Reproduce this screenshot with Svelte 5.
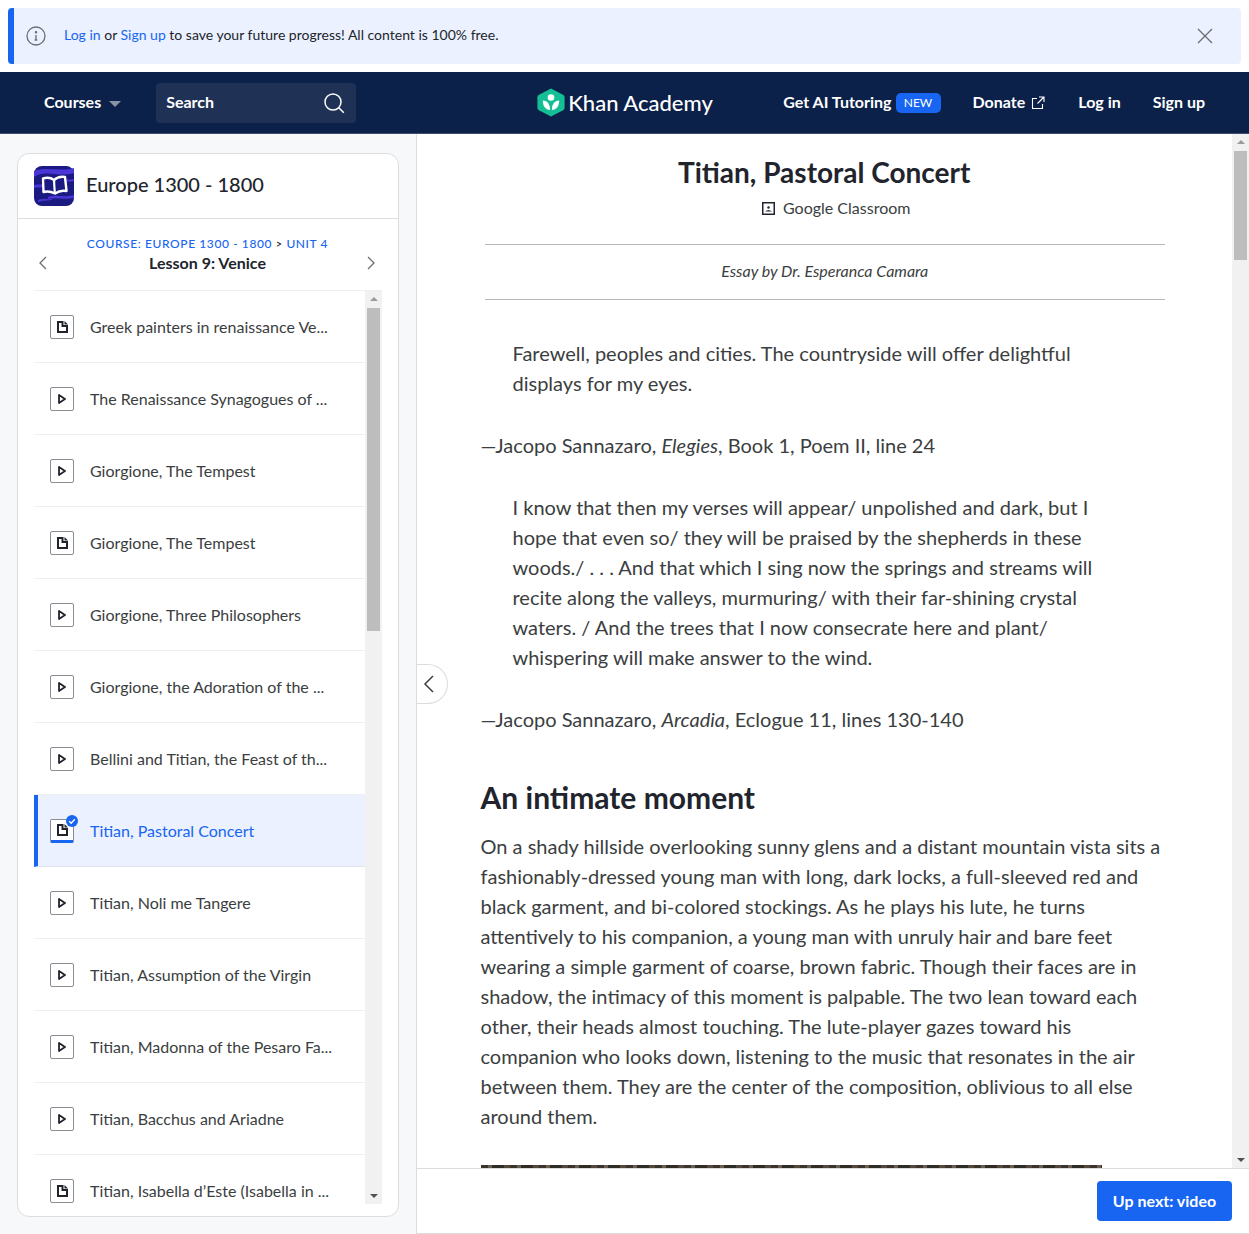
<script>
  const lessons = [
    { title: 'Greek painters in renaissance Ve...', type: 'doc' },
    { title: 'The Renaissance Synagogues of ...', type: 'video' },
    { title: 'Giorgione, The Tempest', type: 'video' },
    { title: 'Giorgione, The Tempest', type: 'doc' },
    { title: 'Giorgione, Three Philosophers', type: 'video' },
    { title: 'Giorgione, the Adoration of the ...', type: 'video' },
    { title: 'Bellini and Titian, the Feast of th...', type: 'video' },
    { title: 'Titian, Pastoral Concert', type: 'doc', active: true },
    { title: 'Titian, Noli me Tangere', type: 'video' },
    { title: 'Titian, Assumption of the Virgin', type: 'video' },
    { title: 'Titian, Madonna of the Pesaro Fa...', type: 'video' },
    { title: 'Titian, Bacchus and Ariadne', type: 'video' },
    { title: 'Titian, Isabella d’Este (Isabella in ...', type: 'doc' }
  ];
</script>

<div class="page">
  <div class="banner">
    <svg class="info" width="20" height="20" viewBox="0 0 20 20" fill="none" stroke="#6b6d74" stroke-width="1.3">
      <circle cx="10" cy="10" r="9" />
      <path d="M10 9v5M8.6 14h2.6" />
      <circle cx="10" cy="6.3" r=".6" fill="#6b6d74" />
    </svg>
    <p><a href="#login">Log in</a> or <a href="#signup">Sign up</a> to save your future progress! All content is 100% free.</p>
    <svg class="close" width="16" height="16" viewBox="0 0 16 16" fill="none" stroke="#6b6d74" stroke-width="1.3">
      <path d="M1 1l14 14M15 1L1 15" />
    </svg>
  </div>

  <nav class="nav">
    <div class="nav-left">
      <span class="nav-link">Courses</span>
      <span class="caret"></span>
      <div class="search">
        <span class="nav-link">Search</span>
        <svg width="22" height="22" viewBox="0 0 22 22" fill="none" stroke="#fff" stroke-width="1.5">
          <circle cx="10" cy="10" r="8" />
          <path d="M15.8 15.8l5 5" />
        </svg>
      </div>
    </div>
    <div class="logo">
      <svg width="28" height="29" viewBox="0 0 28 29">
        <path d="M14 0.5l12 6.2a3 3 0 0 1 1.6 2.6v10.4a3 3 0 0 1-1.6 2.6l-12 6.2-12-6.2a3 3 0 0 1-1.6-2.6V9.300a3 3 0 0 1 1.600-2.600z" fill="#14bf96" />
        <circle cx="14" cy="9.500" r="3.300" fill="#fff" />
        <path d="M5.800 12.500c4.600.3 7.300 3.400 7.300 9.500-4.600-.4-7.300-3.700-7.300-9.500zM22.200 12.500c-4.600.3-7.300 3.400-7.300 9.500 4.600-.4 7.300-3.700 7.300-9.500z" fill="#fff" />
      </svg>
      <span>Khan Academy</span>
    </div>
    <div class="nav-right">
      <span class="nav-link">Get AI Tutoring</span>
      <span class="badge">NEW</span>
      <span class="nav-link donate">Donate</span>
      <svg class="ext" width="14" height="14" viewBox="0 0 14 14" fill="none" stroke="#fff" stroke-width="1.100">
        <path d="M6 2.500H1.500v10h10V8M8 1h5v5M13 1L6.500 7.500" />
      </svg>
      <span class="nav-link login">Log in</span>
      <span class="nav-link signup">Sign up</span>
    </div>
  </nav>

  <div class="main">
    <aside class="side">
      <div class="card">
        <header class="card-head">
          <svg class="course-icon" width="40" height="40" viewBox="0 0 40 40">
            <rect width="40" height="40" rx="8" fill="#1a1a80" />
            <path d="M0 11C12 3 24 12 40 7V2C26 6 12 0 0 5zM14 31c8-3 16 1 26-2v3c-10 2-18-1-26 1zM0 19c4-1 6 0 9-1v3c-3 1-6 0-9 1zM31 14c3-1 6 0 9-1v2c-3 1-6 0-9 1zM4 34c6-2 8 0 14-1v1c-6 1-8 0-14 2z" fill="#4a35d6" />
            <path d="M9 12.500c4-1.200 8-.8 11 1.500 3-2.800 7-3.600 11-3l1.500 14c-4-.8-8 0-11.500 2.500-3.800-2-8-2.500-11.500-1.500z" fill="none" stroke="#fff" stroke-width="2.400" stroke-linejoin="round" />
            <path d="M20 14l.8 13" stroke="#fff" stroke-width="2.200" />
          </svg>
          <h2>Europe 1300 - 1800</h2>
        </header>

        <div class="lesson-head">
          <svg width="10" height="14" viewBox="0 0 10 14" fill="none" stroke="#6b6d74" stroke-width="1.300"><path d="M8 1L2 7l6 6" /></svg>
          <div class="crumbs">
            <div class="crumb"><a href="#course">COURSE: EUROPE 1300 - 1800</a> <span class="gt">&gt;</span> <a href="#unit">UNIT 4</a></div>
            <div class="lesson-name">Lesson 9: Venice</div>
          </div>
          <svg width="10" height="14" viewBox="0 0 10 14" fill="none" stroke="#6b6d74" stroke-width="1.300"><path d="M2 1l6 6-6 6" /></svg>
        </div>

        <div class="list-wrap">
          <ul class="list">
            {#each lessons as lesson}
              <li class="row" class:active={lesson.active}>
                <span class="type">
                  {#if lesson.type === 'doc'}
                    <svg width="11" height="12" viewBox="0 0 11 12">
                      <path d="M1 1h4.500v4H10v6H1z" fill="none" stroke="#21242c" stroke-width="2" />
                      <path d="M7.500 0L11 3.500H7.500z" fill="#21242c" />
                    </svg>
                  {:else}
                    <svg width="8" height="10" viewBox="0 0 8 10" fill="none" stroke="#21242c" stroke-width="1.800" stroke-linejoin="round">
                      <path d="M1 1l6 4-6 4z" />
                    </svg>
                  {/if}
                  {#if lesson.active}
                    <svg class="check" width="12" height="12" viewBox="0 0 12 12">
                      <circle cx="6" cy="6" r="6" fill="#1865f2" />
                      <path d="M3.200 6.200l2 2 3.600-4" fill="none" stroke="#fff" stroke-width="1.400" />
                    </svg>
                  {/if}
                </span>
                <span class="lesson-title">{lesson.title}</span>
              </li>
            {/each}
          </ul>
          <div class="bar side-bar">
            <span class="arrow up"></span>
            <span class="thumb"></span>
            <span class="arrow down"></span>
          </div>
        </div>
      </div>
    </aside>

    <section class="content">
      <button class="collapse" aria-label="Collapse">
        <svg width="11" height="18" viewBox="0 0 11 18" fill="none" stroke="#3b3e40" stroke-width="1.500"><path d="M10 1L2 9l8 8" /></svg>
      </button>
      <div class="scroller">
        <article class="article">
          <h1>Titian, Pastoral Concert</h1>
          <div class="classroom">
            <svg width="13" height="13" viewBox="0 0 13 13">
              <rect x=".75" y=".75" width="11.500" height="11.500" fill="none" stroke="#21242c" stroke-width="1.500" />
              <circle cx="6.500" cy="5.500" r="1.200" fill="#21242c" />
              <path d="M3.500 9.500h6v-.6l-3-1-3 1z" fill="#21242c" />
            </svg>
            <span>Google Classroom</span>
          </div>
          <div class="byline"><span>Essay by Dr. Esperanca Camara</span></div>

          <blockquote>Farewell, peoples and cities. The countryside will offer delightful displays for my eyes.</blockquote>
          <p class="cite">—Jacopo Sannazaro, <em>Elegies</em>, Book 1, Poem II, line 24</p>
          <blockquote>I know that then my verses will appear/ unpolished and dark, but I hope that even so/ they will be praised by the shepherds in these woods./ . . . And that which I sing now the springs and streams will recite along the valleys, murmuring/ with their far-shining crystal waters. / And the trees that I now consecrate here and plant/ whispering will make answer to the wind.</blockquote>
          <p class="cite">—Jacopo Sannazaro, <em>Arcadia</em>, Eclogue 11, lines 130-140</p>

          <h2 class="section">An intimate moment</h2>
          <p>On a shady hillside overlooking sunny glens and a distant mountain vista sits a fashionably-dressed young man with long, dark locks, a full-sleeved red and black garment, and bi-colored stockings. As he plays his lute, he turns attentively to his companion, a young man with unruly hair and bare feet wearing a simple garment of coarse, brown fabric. Though their faces are in shadow, the intimacy of this moment is palpable. The two lean toward each other, their heads almost touching. The lute-player gazes toward his companion who looks down, listening to the music that resonates in the air between them. They are the center of the composition, oblivious to all else around them.</p>
          <div class="painting"></div>
        </article>
        <div class="bar main-bar">
          <span class="arrow up"></span>
          <span class="thumb"></span>
          <span class="arrow down"></span>
        </div>
      </div>
      <footer class="foot">
        <button class="next">Up next: video</button>
      </footer>
    </section>
  </div>
</div>

<style>
  :global(body) {
    margin: 0;
    background: #fff;
    font-family: Lato, "Noto Sans", sans-serif;
    color: #21242c;
  }

  .page {
    height: 100vh;
    display: flex;
    flex-direction: column;
    overflow: hidden;
  }

  .banner {
    flex: none;
    height: 56px;
    margin: 8px 8px 8px;
    box-sizing: border-box;
    background: #ebf1fe;
    border-left: 6px solid #1865f2;
    border-radius: 4px;
    display: flex;
    align-items: center;
    padding: 0 28px 0 12px;
    font-size: 14px;
  }
  .banner p {
    margin: 0 0 4px 18px;
    flex: 1;
  }
  .banner a {
    color: #1865f2;
    text-decoration: none;
  }

  .nav {
    flex: none;
    height: 62px;
    box-sizing: border-box;
    background: #0c2149;
    border-bottom: 1px solid #3d4d6e;
    display: grid;
    grid-template-columns: 1fr auto 1fr;
    align-items: center;
    padding: 0 44px;
    color: #fff;
  }
  .nav-left, .nav-right {
    display: flex;
    align-items: center;
  }
  .nav-right {
    justify-content: flex-end;
  }
  .nav-link {
    font-size: 16px;
    font-weight: 700;
    padding-bottom: 2px;
  }
  .caret {
    margin: 2px 0 0 8px;
    border: 6px solid transparent;
    border-top: 6px solid #8a93a6;
    border-bottom: 0;
  }
  .search {
    margin-left: 35px;
    width: 200px;
    height: 40px;
    box-sizing: border-box;
    background: #1f3155;
    border-radius: 4px;
    display: flex;
    align-items: center;
    justify-content: space-between;
    padding: 0 11px 0 10px;
  }
  .logo {
    display: flex;
    align-items: center;
    gap: 4px;
    font-size: 22px;
    font-weight: 500;
  }
  .logo svg {
    margin-left: 1px;
    margin-right: -1px;
  }
  .badge {
    margin-left: 4px;
    width: 45px;
    height: 20px;
    background: #1865f2;
    border-radius: 5px;
    font-size: 12px;
    line-height: 20px;
    text-align: center;
  }
  .donate {
    margin-left: 32px;
  }
  .ext {
    margin-left: 6px;
  }
  .login {
    margin-left: 33px;
  }
  .signup {
    margin-left: 32px;
  }

  .main {
    flex: 1;
    min-height: 0;
    display: flex;
  }

  .side {
    flex: none;
    width: 417px;
    box-sizing: border-box;
    padding: 19px 17px 17px;
    background: #f7f8fa;
    border-right: 1px solid #dcdcdc;
  }
  .card {
    height: 100%;
    box-sizing: border-box;
    background: #fff;
    border: 1px solid #dcdde0;
    border-radius: 12px;
    display: flex;
    flex-direction: column;
    overflow: hidden;
    padding-bottom: 12px;
  }
  .card-head {
    flex: none;
    height: 65px;
    box-sizing: border-box;
    display: flex;
    align-items: center;
    gap: 12px;
    padding: 0 0 1px 16px;
    border-bottom: 1px solid #dcdde0;
  }
  .card-head h2 {
    margin: 0 0 4px;
    font-size: 20px;
    font-weight: 500;
  }
  .lesson-head {
    flex: none;
    height: 71px;
    display: flex;
    align-items: center;
    justify-content: space-between;
    padding: 0 22px 0 20px;
    box-sizing: border-box;
  }
  .lesson-head svg {
    margin-top: 16px;
  }
  .crumbs {
    text-align: center;
    margin-left: 1px;
  }
  .crumb {
    font-size: 12px;
    font-weight: 500;
    line-height: 16px;
    letter-spacing: .6px;
  }
  .crumb a {
    color: #1865f2;
    text-decoration: none;
  }
  .gt {
    font-size: 11px;
  }
  .lesson-name {
    font-size: 16px;
    line-height: 22px;
    font-weight: 700;
  }
  .list-wrap {
    flex: 1;
    min-height: 0;
    margin: 0 16px;
    display: flex;
    border-top: 1px solid #eeeff0;
  }
  .list {
    flex: 1;
    min-width: 0;
    margin: 0;
    padding: 0;
    list-style: none;
    overflow: hidden;
  }
  .row {
    height: 72px;
    box-sizing: border-box;
    display: flex;
    align-items: center;
    gap: 16px;
    padding-left: 16px;
    border-bottom: 1px solid #eeeff0;
    font-size: 16px;
    color: #3b3e40;
  }
  .row.active {
    background: #ebf1fe;
    border-left: 4px solid #1865f2;
    border-bottom-color: #dfe3ea;
    padding-left: 12px;
  }
  .row.active .lesson-title {
    color: #1865f2;
  }
  .row.active .type {
    border-bottom: 3px solid #1865f2;
    border-radius: 2px;
    height: 24px;
  }
  .lesson-title {
    white-space: nowrap;
  }
  .type {
    flex: none;
    position: relative;
    width: 24px;
    height: 24px;
    box-sizing: border-box;
    border: 1px solid #888d93;
    border-radius: 2px;
    background: #fff;
    display: flex;
    align-items: center;
    justify-content: center;
  }
  .check {
    position: absolute;
    top: -5px;
    right: -5px;
  }

  .bar {
    flex: none;
    background: #f1f1f1;
    display: flex;
    flex-direction: column;
    align-items: center;
  }
  .side-bar {
    width: 17px;
  }
  .main-bar {
    width: 17px;
  }
  .thumb {
    width: 13px;
    background: #bdbdbd;
  }
  .side-bar .thumb {
    height: 323px;
  }
  .main-bar .thumb {
    height: 109px;
  }
  .arrow {
    flex: none;
    width: 0;
    height: 0;
    border: 4px solid transparent;
  }
  .arrow.up {
    margin: 6px 0 7px;
    border-top: 0;
    border-bottom: 4px solid #9a9a9a;
  }
  .arrow.down {
    margin: auto 0 6px;
    border-bottom: 0;
    border-top: 4px solid #505050;
  }

  .content {
    flex: 1;
    min-width: 0;
    position: relative;
    display: flex;
    flex-direction: column;
    background: #fff;
  }
  .collapse {
    position: absolute;
    left: 0;
    top: 530px;
    width: 31px;
    height: 40px;
    background: #fff;
    border: 1px solid #dcdcdc;
    border-left: 0;
    border-radius: 0 20px 20px 0;
    display: flex;
    align-items: center;
    justify-content: flex-start;
    z-index: 1;
    padding: 0 0 0 6px;
    box-sizing: border-box;
  }
  .scroller {
    flex: 1;
    min-height: 0;
    display: flex;
  }
  .article {
    flex: 1;
    min-width: 0;
    overflow: hidden;
    padding: 0 64px 0 63.5px;
    font-size: 20px;
    line-height: 30px;
    color: #3b3e40;
  }
  .article h1 {
    margin: 18px 0 0;
    font-size: 28px;
    line-height: 40px;
    font-weight: 700;
    text-align: center;
    color: #21242c;
  }
  .classroom {
    margin-top: 4px;
    padding-left: 24px;
    display: flex;
    align-items: center;
    justify-content: center;
    gap: 8px;
    font-size: 16px;
    line-height: 24px;
  }
  .byline {
    margin: 24px 3px 0 4px;
    height: 54px;
    border-top: 1px solid #b9b9bb;
    border-bottom: 1px solid #b9b9bb;
    display: flex;
    align-items: center;
    justify-content: center;
    font-size: 16px;
    font-style: italic;
  }
  .byline span {
    padding-bottom: 2px;
  }
  .article p {
    margin: 0 0 34px;
  }
  .article .cite {
    margin-bottom: 32px;
  }
  .article blockquote {
    margin: 0 72px 32px 32px;
  }
  .byline + blockquote {
    margin-top: 38px;
  }
  .section {
    margin: 0 0 16px;
    padding-top: 13px;
    font-size: 30px;
    line-height: 36px;
    font-weight: 700;
    color: #21242c;
  }
  .painting {
    width: 621px;
    height: 400px;
    background: repeating-linear-gradient(90deg, #3a342e 0 7px, #6b5d50 7px 11px, #2f2b27 11px 23px, #54483c 23px 29px);
  }

  .foot {
    flex: none;
    height: 66px;
    box-sizing: border-box;
    background: #fff;
    border-top: 1px solid #dcdcdc;
    border-bottom: 1px solid #dcdcdc;
    display: flex;
    align-items: center;
    justify-content: flex-end;
    padding-right: 17px;
  }
  .next {
    width: 135px;
    height: 40px;
    padding: 0 0 2px;
    border: 0;
    border-radius: 4px;
    background: #1865f2;
    color: #fff;
    font: 700 16px Lato, sans-serif;
  }
</style>
